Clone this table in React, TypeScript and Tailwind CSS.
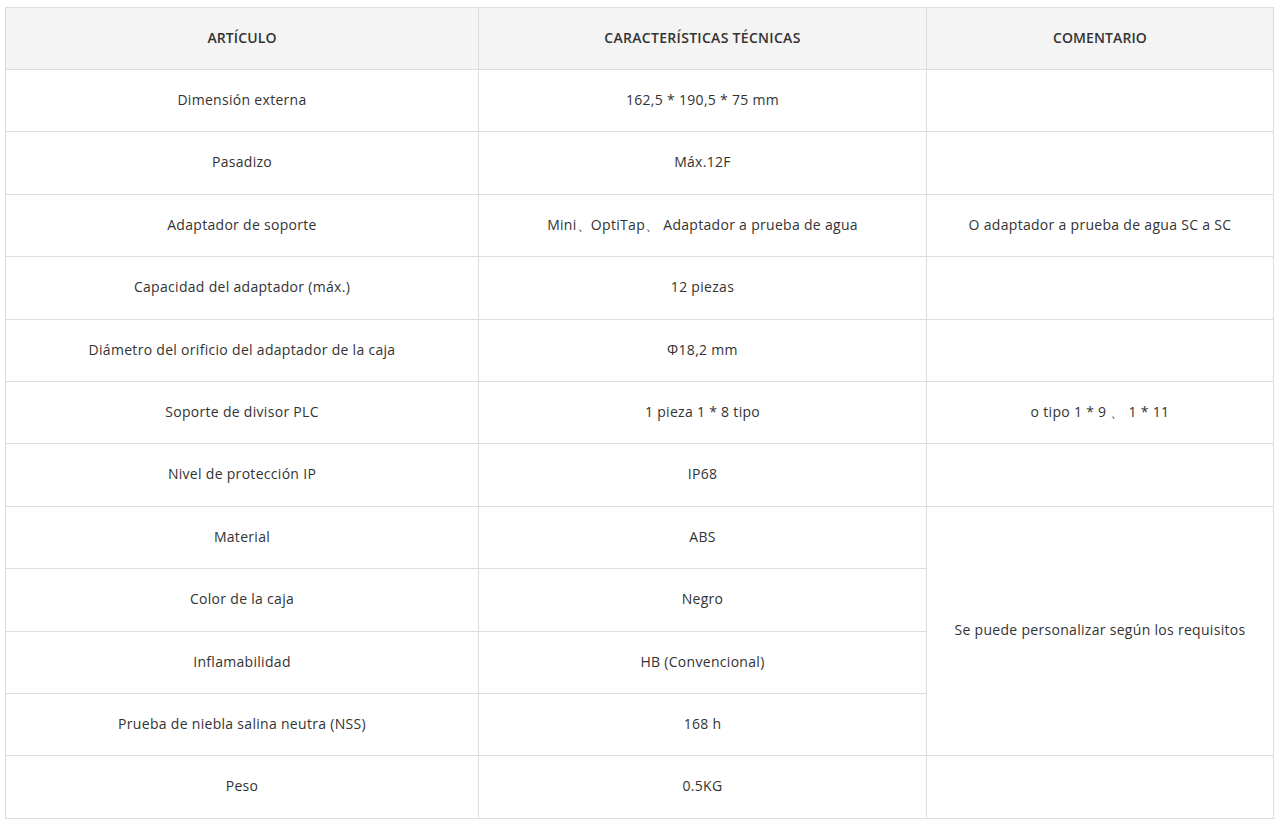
import React from 'react';

type Row = { item: string; spec: string; comment?: string; span?: number; skip?: boolean };

const rows: Row[] = [
    { item: 'Dimensión externa', spec: '162,5 * 190,5 * 75 mm', comment: '' },
    { item: 'Pasadizo', spec: 'Máx.12F', comment: '' },
    { item: 'Adaptador de soporte', spec: 'Mini、OptiTap、 Adaptador a prueba de agua', comment: 'O adaptador a prueba de agua SC a SC' },
    { item: 'Capacidad del adaptador (máx.)', spec: '12 piezas', comment: '' },
    { item: 'Diámetro del orificio del adaptador de la caja', spec: 'Φ18,2 mm', comment: '' },
    { item: 'Soporte de divisor PLC', spec: '1 pieza 1 * 8 tipo', comment: 'o tipo 1 * 9 、 1 * 11' },
    { item: 'Nivel de protección IP', spec: 'IP68', comment: '' },
    { item: 'Material', spec: 'ABS', comment: 'Se puede personalizar según los requisitos', span: 4 },
    { item: 'Color de la caja', spec: 'Negro', skip: true },
    { item: 'Inflamabilidad', spec: 'HB (Convencional)', skip: true },
    { item: 'Prueba de niebla salina neutra (NSS)', spec: '168 h', skip: true },
    { item: 'Peso', spec: '0.5KG', comment: '' },
];

const cell = 'border border-[#dddddd] px-3 pt-[19px] pb-[20px] text-center align-middle';
const head = `${cell} text-[14px] leading-[22px] font-semibold tracking-[0.1px] text-[#333333]`;

export default function App() {
    return (
        <div className="min-h-screen bg-white pl-[5px] pt-[7px]" style={{ fontFamily: '"Open Sans", "Liberation Sans", sans-serif' }}>
            <table className="w-[1268px] table-fixed border-collapse text-[14px] leading-[22.4px] tracking-[0.3px] text-[#333333]">
                <colgroup>
                    <col className="w-[473px]" />
                    <col className="w-[448px]" />
                    <col className="w-[347px]" />
                </colgroup>
                <thead>
                    <tr className="bg-[#f4f4f4]">
                        <th className={head}>ARTÍCULO</th>
                        <th className={`${head} tracking-[0.3px]`}>CARACTERÍSTICAS TÉCNICAS</th>
                        <th className={head}>COMENTARIO</th>
                    </tr>
                </thead>
                <tbody>
                    {rows.map((r) => (
                        <tr key={r.item}>
                            <td className={cell}>{r.item}</td>
                            <td className={cell}>{r.spec}</td>
                            {!r.skip && (
                                <td className={cell} rowSpan={r.span ?? 1}>
                                    {r.comment}
                                </td>
                            )}
                        </tr>
                    ))}
                </tbody>
            </table>
        </div>
    );
}
